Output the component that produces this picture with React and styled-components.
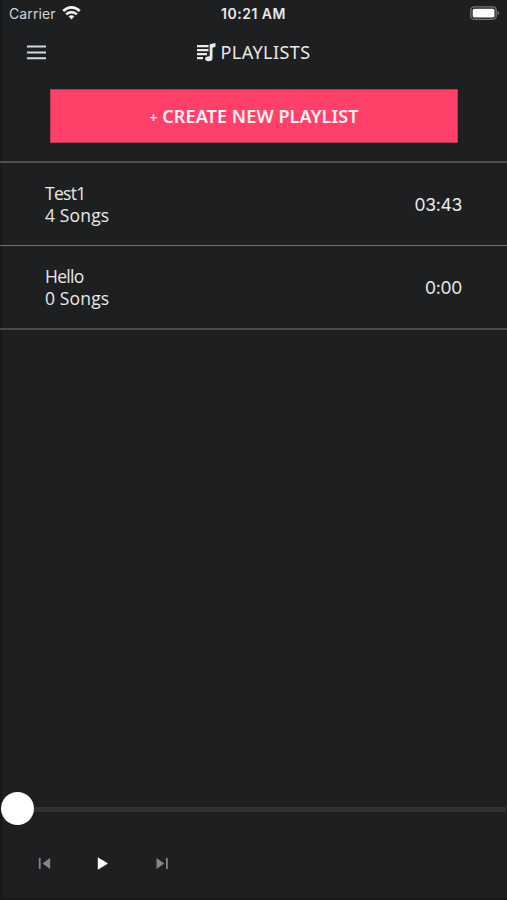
import styled, { createGlobalStyle } from 'styled-components';

const GlobalStyle = createGlobalStyle`
  * {
    box-sizing: border-box;
  }

  body {
    margin: 0;
    background: #1e1f21;
  }
`;

const Screen = styled.div`
  display: flex;
  flex-direction: column;
  width: 507px;
  height: 900px;
  overflow: hidden;
  color: #e9e9ea;
  background: #1e1f21;
  box-shadow: inset 2px 0 1px #17181a, inset 0 -2px 0 #17171a;
  font-family: 'Open Sans', sans-serif;
`;

const StatusBar = styled.div`
  display: grid;
  grid-template-columns: 1fr auto 1fr;
  align-items: center;
  height: 26px;
  padding: 0 7px 0 9px;
  font-family: Inter, sans-serif;
  font-size: 14px;
`;

const Carrier = styled.div`
  display: flex;
  align-items: center;
  gap: 6px;
  color: #d5d5d6;
  letter-spacing: 0.1px;
`;

const Clock = styled.div`
  margin-right: 2px;
  font-size: 14px;
  font-weight: 600;
  letter-spacing: 0.5px;
`;

const Battery = styled.svg`
  justify-self: end;
`;

const Header = styled.header`
  display: grid;
  grid-template-columns: 1fr auto 1fr;
  align-items: center;
  height: 50px;
  padding: 2px 27px 0;
`;

const Title = styled.h1`
  display: flex;
  align-items: center;
  gap: 5px;
  margin: 0;
  font-family: 'Noto Sans', sans-serif;
  font-size: 18px;
  font-weight: 400;
  letter-spacing: 0.4px;
`;

const CreateButton = styled.button`
  height: 54px;
  margin: 13px 49px 18px 50px;
  padding: 0;
  border: 1px solid #b53952;
  color: #fff0f3;
  background: #ff4069;
  font-family: 'Noto Sans', sans-serif;
  font-size: 18px;
  font-weight: 600;
  letter-spacing: 0.1px;

  span {
    font-size: 14px;
  }
`;

const List = styled.ul`
  flex: 1;
  margin: 0;
  padding: 0;
  list-style: none;
  border-top: 2px solid #4e4f51;
`;

const Row = styled.li`
  display: flex;
  align-items: center;
  justify-content: space-between;
  height: ${({ $last }) => ($last ? '84px' : '83px')};
  padding: 0 45px;
  border-bottom: ${({ $last }) => ($last ? '2px solid #48494b' : '1px solid #717274')};
`;

const Info = styled.div`
  font-size: 17.5px;
  font-weight: 500;
  line-height: 22.5px;
`;

const Name = styled.div`
  letter-spacing: -0.7px;
`;

const Songs = styled.div`
  letter-spacing: 0.15px;
`;

const Duration = styled.div`
  font-family: Inter, sans-serif;
  font-size: 17.5px;
  letter-spacing: -0.3px;
`;

const Player = styled.footer`
  height: 109px;
`;

const Slider = styled.div`
  display: flex;
  align-items: center;
  height: 34px;
  padding-left: 1px;
`;

const Thumb = styled.div`
  width: 33px;
  height: 33px;
  border-radius: 50%;
  background: #fff;
`;

const Track = styled.div`
  flex: 1;
  height: 5px;
  margin: 3px 1px 0 0;
  background: #303133;
`;

const Controls = styled.div`
  display: flex;
  gap: 46px;
  padding: 32px 38px;
`;

const Control = styled.button`
  display: flex;
  padding: 0;
  border: 0;
  color: ${({ $active }) => ($active ? '#fff' : '#858688')};
  background: none;
`;

const playlists = [
  { name: 'Test1', songs: 4, duration: '03:43' },
  { name: 'Hello', songs: 0, duration: '0:00' },
];

const controls = [
  { name: 'Previous', path: 'M.8 1h1.8v11H.8zM12.2 1v11L4.5 6.5z' },
  { name: 'Play', path: 'M.8 .3v12.4L11 6.5z', active: true },
  { name: 'Next', path: 'M.5 1v11l7.7-5.5zM10 1h1.8v11H10z' },
];

function WifiIcon() {
  return (
    <svg width='19' height='14' viewBox='0 0 19 14' fill='none' stroke='#f4f4f4' strokeWidth='2.7'>
      <path d='M1.2 5.1Q9.5 -2.2 17.8 5.1' />
      <path d='M4.1 8.3Q9.5 3.8 14.9 8.3' />
      <path d='M6.6 10.2Q9.5 8.1 12.4 10.2L9.5 13.4z' fill='#f4f4f4' stroke='none' />
    </svg>
  );
}

function App() {
  return (
    <Screen>
      <GlobalStyle />
      <StatusBar>
        <Carrier>
          Carrier
          <WifiIcon />
        </Carrier>
        <Clock>10:21 AM</Clock>
        <Battery width='30' height='15' viewBox='0 0 30 15'>
          <rect x='.8' y='.8' width='25.4' height='12.6' rx='3.5' fill='none' stroke='#77787a' strokeWidth='1.3' />
          <rect x='2.7' y='2.7' width='21.8' height='8.8' rx='1.6' fill='#fff' />
          <path d='M27.7 5v4.2q3-2.1 0-4.2z' fill='#77787a' />
        </Battery>
      </StatusBar>
      <Header>
        <svg width='19' height='15' viewBox='0 0 19 15' fill='#d4d8dc'>
          <path d='M0 .5h19v2H0zM0 6.5h19v2H0zM0 12.2h19v2H0z' />
        </svg>
        <Title>
          <svg width='19' height='19' viewBox='0 0 19 19' fill='#e9e9ea'>
            <path d='M0 2h11.5v2.2H0zM0 6h11.5v2.2H0zM0 10h10v2.2H0zM0 14h6v2.2H0z' />
            <path d='M12.7 1.8Q12.7 1 13.7 .9L18.5 0v3.8l-3 .9v10.6q0 2.9-3.8 2.9-3.6 0-3.6-2.4 0-2.6 4.6-2.6z' />
          </svg>
          PLAYLISTS
        </Title>
      </Header>
      <CreateButton>
        <span>+</span> CREATE NEW PLAYLIST
      </CreateButton>
      <List>
        {playlists.map((playlist, index) => (
          <Row key={playlist.name} $last={index === playlists.length - 1}>
            <Info>
              <Name>{playlist.name}</Name>
              <Songs>{playlist.songs} Songs</Songs>
            </Info>
            <Duration>{playlist.duration}</Duration>
          </Row>
        ))}
      </List>
      <Player>
        <Slider>
          <Thumb />
          <Track />
        </Slider>
        <Controls>
          {controls.map((control) => (
            <Control key={control.name} aria-label={control.name} $active={control.active}>
              <svg width='13' height='13' viewBox='0 0 13 13' fill='currentColor'>
                <path d={control.path} />
              </svg>
            </Control>
          ))}
        </Controls>
      </Player>
    </Screen>
  );
}

export default App;
